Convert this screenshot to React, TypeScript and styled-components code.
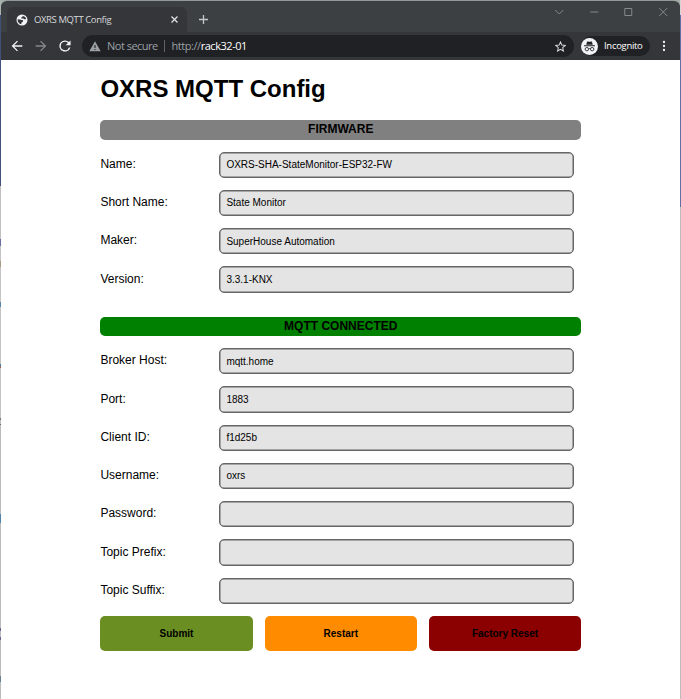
import React from 'react';
import styled, { createGlobalStyle } from 'styled-components';

const GlobalStyle = createGlobalStyle`
  * { box-sizing: border-box; }
  body { margin: 0; background: #fff; overflow: hidden; }
`;

const Desktop = styled.div`
  display: grid;
  grid-template-columns: 1px 679px 1px;
  width: 681px;
  height: 699px;
  background: #a3aba8;
  overflow: hidden;
`;

const LeftEdge = styled.div`
  background: linear-gradient(
    #a9b5ae 0 15px, #44507c 15px 186px, #c0c0c0 186px 239px, #666da0 239px 246px,
    #c4c4c4 246px 261px, #a79c7c 261px 267px, #c4c4c4 267px 302px, #5784ab 302px 307px,
    #c4c4c4 307px 364px, #467c9f 364px 366px, #a06458 366px 368px, #c4c4c4 368px 418px,
    #777 418px 420px, #bbb 420px 424px, #666 424px 425px, #bbb 425px 514px,
    #5080ac 514px 523px, #bbb 523px 628px, #666590 628px 631px, #bbb 631px 637px,
    #666590 637px 640px, #bbb 640px 676px, #657f91 676px 682px, #bbb 682px
  );
`;

const RightEdge = styled.div`
  background: linear-gradient(#d3d6d5 0 15px, #5f70a3 15px 207px, #bcbcbc 207px);
`;

const Browser = styled.div`
  display: flex;
  flex-direction: column;
  background: #fff;
  border-top: 1px solid #929a97;
  border-radius: 6px 6px 0 0;
  overflow: hidden;
`;

const TabStrip = styled.div`
  display: flex;
  height: 31px;
  padding: 6px 0 0 6px;
  background: #3c4043;
`;

const Tab = styled.div`
  display: flex;
  align-items: center;
  width: 180px;
  height: 25px;
  padding: 0 8px 0 9px;
  border-radius: 6px 6px 0 0;
  background: #35363a;
  color: #d6d8db;
  font: 9.5px/14px "Open Sans", "Noto Sans", sans-serif;
`;

const TabTitle = styled.span`
  flex: 1;
  margin-left: 6px;
  letter-spacing: -0.4px;
  white-space: nowrap;
`;

const NewTab = styled.div`
  display: flex;
  align-items: center;
  margin-left: 11px;
`;

const WindowControls = styled.div`
  display: flex;
  gap: 22px;
  height: 12px;
  margin: -1.5px 11px 0 auto;
`;

const Toolbar = styled.div`
  display: flex;
  align-items: center;
  flex: none;
  height: 28px;
  padding: 0 10px;
  background: #35363a;
`;

const Navigation = styled.div`
  display: flex;
  gap: 12px;
  width: 71px;
`;

const AddressBar = styled.div`
  display: flex;
  align-items: center;
  width: 492px;
  height: 22px;
  padding: 0 8px 0 7px;
  border-radius: 11px;
  background: #202124;
  color: #9aa0a6;
  font: 11px/20px "Open Sans", "Noto Sans", sans-serif;
`;

const Security = styled.span`
  width: 57px;
  margin-left: 6px;
  white-space: nowrap;
  letter-spacing: -0.5px;
`;

const Url = styled.span`
  flex: 1;
  margin-left: 6.5px;
  letter-spacing: -0.45px;
`;

const Hostname = styled.span`
  color: #fff;
`;

const Separator = styled.span`
  width: 1px;
  height: 12px;
  background: #5f6368;
`;

const Incognito = styled.div`
  display: flex;
  align-items: center;
  gap: 6px;
  width: 69px;
  height: 20px;
  margin: 0 9px 0 7px;
  border-radius: 10px;
  background: #202124;
  color: #fff;
  font: 500 9.5px/18px "Open Sans", "Noto Sans", sans-serif;
  letter-spacing: -0.3px;
`;

const Page = styled.main`
  width: 480.75px;
  margin: 15.5px 0 0 99.4px;
  color: #000;
  font: 12px/14px "Liberation Sans", Arial, sans-serif;
`;

const Title = styled.h1`
  margin: 0;
  height: 44.5px;
  font-size: 24px;
  line-height: 26px;
  white-space: nowrap;
`;

const Section = styled.section`
  & + & { margin-top: 24px; }
`;

const SectionTitle = styled.h2<{ $color: string }>`
  height: 19.5px;
  margin: 0;
  border-radius: 5px;
  background: ${({ $color }) => $color};
  font-size: 12px;
  line-height: 19.5px;
  text-align: center;
`;

const Field = styled.label`
  display: grid;
  grid-template-columns: 119px 355px;
  height: 38.25px;
  padding-top: 12px;
`;

const FieldName = styled.span`
  padding-top: 5.25px;
`;

const FieldInput = styled.input`
  width: 100%;
  height: 26.25px;
  margin: 0;
  padding: 0 6px;
  border: 1px solid #666;
  border-radius: 5px;
  outline: 0;
  background: #e4e4e4;
  box-shadow: inset 0 0 0 0.5px #666;
  color: #000;
  font: 10px "Liberation Sans", Arial, sans-serif;
`;

const Actions = styled.div`
  display: grid;
  grid-template-columns: repeat(3, 1fr);
  gap: 12px;
  margin-top: 12px;
`;

const ActionButton = styled.button<{ $color: string }>`
  height: 35.25px;
  padding: 0;
  border: 0;
  border-radius: 5px;
  background: ${({ $color }) => $color};
  color: #000;
  font: bold 10px "Liberation Sans", Arial, sans-serif;
`;

const firmware = [
  ['Name:', 'OXRS-SHA-StateMonitor-ESP32-FW'],
  ['Short Name:', 'State Monitor'],
  ['Maker:', 'SuperHouse Automation'],
  ['Version:', '3.3.1-KNX'],
];
const mqtt = [
  ['Broker Host:', 'mqtt.home'],
  ['Port:', '1883'],
  ['Client ID:', 'f1d25b'],
  ['Username:', 'oxrs'],
  ['Password:', ''],
  ['Topic Prefix:', ''],
  ['Topic Suffix:', ''],
];

function Fields({ rows }: { rows: string[][] }) {
  return (
    <>
      {rows.map(([name, value]) => (
        <Field key={name}>
          <FieldName>{name}</FieldName>
          <FieldInput defaultValue={value} />
        </Field>
      ))}
    </>
  );
}

const GlobeIcon = () => (
  <svg width="12" height="12" viewBox="0 0 24 24">
    <circle cx="12" cy="12" r="11" fill="#f1f3f4" />
    <path fill="#35363a" d="M13 4.2c3.3.2 6 2.3 7.2 5.2l-2.4 1.8-3.4-2.4-3.8.4.2-2.6 2.2-.6ZM3.4 10.5l4.4.3 3.4 1.4 3 .2-.4 3.2-2.8 1.2-.4 3.8a8.8 8.8 0 0 1-7.2-10.1Z" />
  </svg>
);

const NavIcon = ({ path, color, small }: { path: string; color: string; small?: boolean }) => (
  <svg width="12" height="12" viewBox={small ? '3.4 3.4 17.2 17.2' : '3 3 18 18'} fill={color}>
    <path d={path} />
  </svg>
);

const IncognitoIcon = () => (
  <svg width="17" height="17" viewBox="0 0 18 18">
    <circle cx="9" cy="9" r="9" fill="#f1f3f4" />
    <path d="m5.5 7.2 1-3.6 2.5.5 2.5-.5 1 3.6Z" fill="#202124" />
    <path d="M3.2 8.2h11.6" stroke="#202124" strokeWidth="1.1" />
    <g fill="none" stroke="#202124" strokeWidth=".9">
      <circle cx="6.2" cy="11.8" r="1.8" />
      <circle cx="11.8" cy="11.8" r="1.8" />
      <path d="M8 11.5q1-.7 2 0" />
    </g>
  </svg>
);

const controls = ['M2 4l4 4 4-4', 'M2 6h8', 'M2.5 2.5h7v7h-7z', 'M2 2l8 8M10 2l-8 8'];

export default function App() {
  return (
    <Desktop>
      <GlobalStyle />
      <LeftEdge />
      <Browser>
        <TabStrip>
          <Tab>
            <GlobeIcon />
            <TabTitle>OXRS MQTT Config</TabTitle>
            <svg width="9" height="9" viewBox="0 0 9 9" stroke="#dfe1e4" strokeWidth="1.3"><path d="m1.5 1.5 6 6m0-6-6 6" /></svg>
          </Tab>
          <NewTab>
            <svg width="11" height="11" viewBox="0 0 11 11" stroke="#c5c8cb" strokeWidth="1.3"><path d="M5.5 1v9M1 5.5h9" /></svg>
          </NewTab>
          <WindowControls>
            {controls.map((path) => (
              <svg key={path} width="12.5" height="12" viewBox="0 0 12 12" fill="none" stroke="#85898b" strokeWidth="1"><path d={path} /></svg>
            ))}
          </WindowControls>
        </TabStrip>
        <Toolbar>
          <Navigation>
            <NavIcon color="#f1f3f4" path="M20 11H7.8l5.6-5.6L12 4l-8 8 8 8 1.4-1.4L7.8 13H20v-2Z" />
            <NavIcon color="#85888c" path="m12 4-1.4 1.4 5.6 5.6H4v2h12.2l-5.6 5.6L12 20l8-8-8-8Z" />
            <NavIcon small color="#f1f3f4" path="M17.65 6.35A8 8 0 1 0 19.73 14h-2.08A6 6 0 1 1 12 6c1.66 0 3.14.69 4.22 1.78L13 11h7V4l-2.35 2.35Z" />
          </Navigation>
          <AddressBar>
            <svg width="12" height="11" viewBox="0 0 12 11"><path fill="#9aa0a6" d="M6 .3 11.7 10.3H.3Z" /><path stroke="#202124" strokeWidth="1.1" d="M6 4v3m0 1v1" /></svg>
            <Security>Not secure</Security>
            <Separator />
            <Url>http://<Hostname>rack32-01</Hostname></Url>
            <svg width="11" height="11" viewBox="0 0 24 24" fill="none" stroke="#d5d7da" strokeWidth="2.2"><path d="m12 2 3 7 7.3.6-5.5 4.9 1.6 7.4L12 18l-6.4 3.9 1.6-7.4-5.5-4.9L9 9Z" /></svg>
          </AddressBar>
          <Incognito><IncognitoIcon />Incognito</Incognito>
          <svg width="10" height="12" viewBox="0 0 10 12" fill="#f1f3f4"><circle cx="5" cy="2" r="1.15" /><circle cx="5" cy="6" r="1.15" /><circle cx="5" cy="10" r="1.15" /></svg>
        </Toolbar>
        <Page>
          <Title>OXRS MQTT Config</Title>
          <Section>
            <SectionTitle $color="#808080">FIRMWARE</SectionTitle>
            <Fields rows={firmware} />
          </Section>
          <Section>
            <SectionTitle $color="#008000">MQTT CONNECTED</SectionTitle>
            <Fields rows={mqtt} />
          </Section>
          <Actions>
            <ActionButton $color="#6b8e23">Submit</ActionButton>
            <ActionButton $color="#ff8c00">Restart</ActionButton>
            <ActionButton $color="#8b0000">Factory Reset</ActionButton>
          </Actions>
        </Page>
      </Browser>
      <RightEdge />
    </Desktop>
  );
}
